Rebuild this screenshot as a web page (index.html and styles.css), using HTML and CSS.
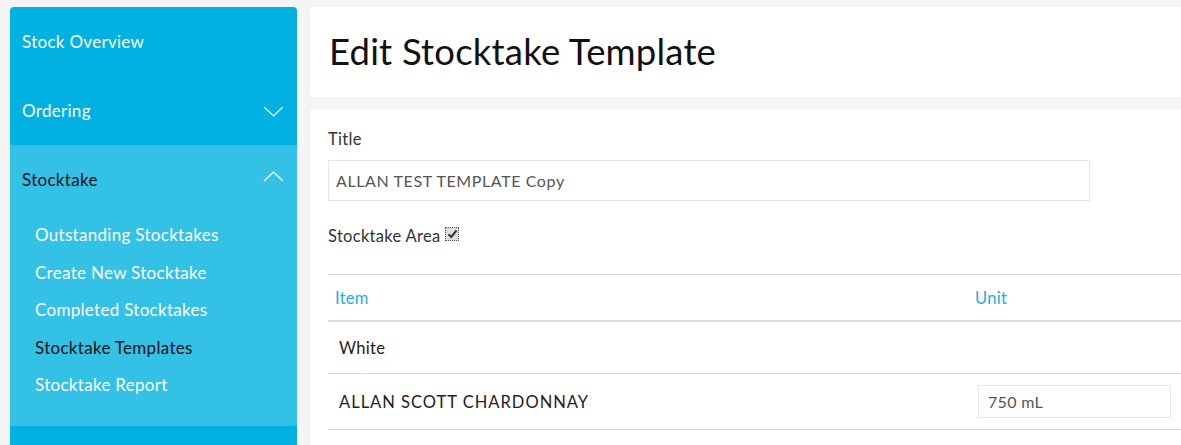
FILE: index.html
```html
<!DOCTYPE html>
<html>
<head>
<meta charset="utf-8">
<link rel="stylesheet" href="styles.css">
</head>
<body>
<div class="layout">
  <nav class="sidebar">
    <div class="nav-item">Stock Overview</div>
    <div class="nav-item has-chevron">Ordering
      <svg class="chev" width="21" height="11" viewBox="0 0 21 11"><polyline points="1,1 10.5,10 20,1" fill="none" stroke="#fff" stroke-width="1.2"/></svg>
    </div>
    <div class="nav-group">
      <div class="nav-item group-head active has-chevron">Stocktake
        <svg class="chev" width="21" height="11" viewBox="0 0 21 11"><polyline points="1,10 10.5,1 20,10" fill="none" stroke="#fff" stroke-width="1.2"/></svg>
      </div>
      <ul class="sub-list">
        <li>Outstanding Stocktakes</li>
        <li>Create New Stocktake</li>
        <li>Completed Stocktakes</li>
        <li class="current">Stocktake Templates</li>
        <li>Stocktake Report</li>
      </ul>
    </div>
    <div class="nav-item tail"></div>
  </nav>
  <main class="main">
    <section class="card header-card">
      <h1>Edit Stocktake Template</h1>
    </section>
    <section class="card form-card">
      <label class="field-label">Title</label>
      <div class="text-input wide">ALLAN TEST TEMPLATE Copy</div>
      <div class="check-row">Stocktake Area <span class="checkbox"><svg width="11" height="10" viewBox="0 0 11 10"><path d="M1.5 5.2 L4.2 8 L9.5 1.5" fill="none" stroke="#333" stroke-width="2"/></svg></span></div>
      <table class="items">
        <thead>
          <tr><th class="col-item">Item</th><th class="col-unit">Unit</th></tr>
        </thead>
        <tbody>
          <tr class="r1"><td>White</td><td></td></tr>
          <tr class="r2"><td class="caps">ALLAN SCOTT CHARDONNAY</td><td class="unit-cell"><div class="text-input small">750 mL</div></td></tr>
        </tbody>
      </table>
    </section>
  </main>
</div>
</body>
</html>
```

FILE: styles.css
```css
html, body {
  margin: 0;
  padding: 0;
  overflow: hidden;
  background: #f4f4f4;
  font-family: "Lato", "Open Sans", sans-serif;
}
.layout {
  display: flex;
  align-items: flex-start;
  gap: 13px;
  padding: 7px 0 0 10px;
  width: 1200px;
}
.sidebar {
  width: 287px;
  flex: none;
  background: #00b1e1;
  border-radius: 4px 4px 0 0;
  overflow: hidden;
  color: #fff;
  letter-spacing: 0.3px;
}
.nav-item {
  height: 69px;
  line-height: 69px;
  padding: 0 12px;
  font-size: 17px;
  position: relative;
}
.nav-item:first-child {
  line-height: 70px;
}
.chev {
  position: absolute;
  right: 13px;
  top: 30px;
}
.nav-group {
  background: #33c1e6;
}
.group-head {
  height: 68px;
  line-height: 68px;
  color: #111;
}
.group-head .chev {
  top: 26px;
}
.sub-list {
  list-style: none;
  margin: 0;
  padding: 3px 0 22px 25px;
}
.sub-list li {
  height: 37.5px;
  line-height: 37.5px;
  font-size: 17px;
  color: #fff;
}
.sub-list li.current {
  color: #111;
}
.tail {
  height: 30px;
}
.main {
  width: 880px;
  flex: none;
  display: flex;
  flex-direction: column;
  gap: 12px;
  letter-spacing: 0.3px;
}
.card {
  background: #fff;
  border-radius: 4px;
}
.header-card {
  height: 90px;
  display: flex;
  align-items: center;
  padding-left: 19px;
}
.header-card h1 {
  margin: 0;
  font-weight: 400;
  font-size: 36.5px;
  letter-spacing: 0.2px;
  color: #111;
  position: relative;
  top: -1px;
}
.form-card {
  padding: 19px 0 20px 18px;
  color: #333;
}
.field-label {
  display: block;
  font-size: 16.5px;
  line-height: 22px;
  margin-bottom: 10px;
}
.text-input {
  border: 1px solid #e6e6e6;
  box-sizing: border-box;
  font-size: 16px;
  color: #555;
  padding-left: 7px;
}
.text-input.wide {
  width: 762px;
  height: 41px;
  line-height: 39px;
  letter-spacing: 0.6px;
}
.check-row {
  font-size: 16.5px;
  margin-top: 24px;
  line-height: 22px;
  display: flex;
  align-items: center;
  gap: 5px;
}
.checkbox {
  width: 14px;
  height: 14px;
  box-sizing: border-box;
  border: 1px dotted #555;
  background: #ddd;
  display: inline-flex;
  align-items: center;
  justify-content: center;
  position: relative;
  top: -2px;
}
.checkbox svg {
  display: block;
}
.items {
  margin-top: 27px;
  width: 862px;
  border-collapse: collapse;
  font-size: 16.5px;
}
.items th {
  text-align: left;
  font-weight: 400;
  color: #29abe2;
  height: 45px;
  padding: 0 0 0 7px;
  border-top: 1px solid #ddd;
  border-bottom: 2px solid #ddd;
}
.items th.col-unit {
  width: 215px;
  padding-left: 5px;
}
.items td {
  padding: 0 0 0 11px;
  border-bottom: 1px solid #ddd;
  color: #222;
}
.items td.caps {
  letter-spacing: 1px;
}
.items tr.r1 td {
  height: 51px;
}
.items tr.r2 td {
  height: 55px;
}
.items td.unit-cell {
  padding-left: 8px;
}
.text-input.small {
  width: 193px;
  height: 33px;
  line-height: 31px;
  padding-left: 9px;
}
```
